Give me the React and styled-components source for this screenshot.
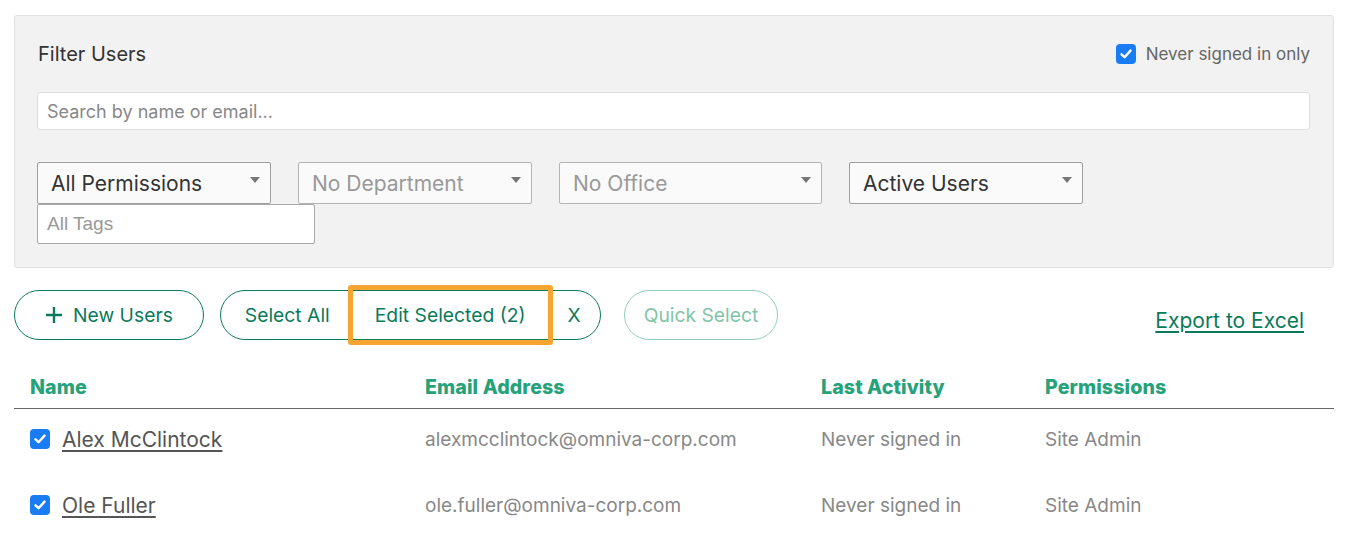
import React from 'react';
import styled, { createGlobalStyle } from 'styled-components';

const GlobalStyle = createGlobalStyle`
  body {
    margin: 0;
    background: #fff;
    font-family: Inter, "Open Sans", sans-serif;
  }
`;

const GREEN = '#0b7a5b';
const GREEN_LIGHT = '#26a27b';

// Page wrapper
const Page = styled.div`
  padding: 15px 18px 0 14px;
`;

// Grey filter panel
const FilterPanel = styled.section`
  background: #f2f2f2;
  border: 1px solid #e0e0e0;
  border-radius: 3px;
  padding: 22px 23px 23px 22px;
`;

const PanelHeader = styled.div`
  display: flex;
  align-items: center;
  justify-content: space-between;
  height: 32px;
`;

const PanelTitle = styled.h2`
  margin: 0 0 0 1px;
  font-size: 20px;
  font-weight: 400;
  color: #333;
`;

const CheckLabel = styled.label`
  display: flex;
  align-items: center;
  gap: 10px;
  font-size: 17px;
  color: #666;
`;

const Box = styled.span`
  width: 20px;
  height: 20px;
  border-radius: 4px;
  background: #1a7cf5;
  display: inline-flex;
  align-items: center;
  justify-content: center;
  flex-shrink: 0;
`;

const SearchInput = styled.div`
  margin-top: 22px;
  height: 36px;
  background: #fff;
  border: 1px solid #dcdcdc;
  border-radius: 3px;
  display: flex;
  align-items: center;
  padding-left: 9px;
  font-size: 18px;
  color: #888;
`;

const SelectRow = styled.div`
  margin-top: 32px;
  display: flex;
  gap: 27px;
`;

const SelectBox = styled.div`
  width: ${(p) => p.$width}px;
  height: 40px;
  box-sizing: content-box;
  background: #fafafa;
  border: 1px solid ${(p) => (p.$disabled ? '#b5b5b5' : '#a0a0a0')};
  border-radius: 2px;
  display: flex;
  align-items: center;
  justify-content: space-between;
  padding: 0 0 0 13px;
  font-size: 21px;
  color: ${(p) => (p.$disabled ? '#999' : '#333')};
`;

const Arrow = styled.span`
  width: 0;
  height: 0;
  border-left: 5px solid transparent;
  border-right: 5px solid transparent;
  border-top: 6px solid #777;
  margin: 0 10px 6px 0;
`;

const TagsInput = styled.div`
  width: 267px;
  height: 38px;
  background: #fff;
  border: 1px solid #a9a9a9;
  border-radius: 2px;
  display: flex;
  align-items: center;
  padding-left: 9px;
  font-family: "Liberation Sans", Arial, sans-serif;
  font-size: 19px;
  color: #999;
`;

// Action toolbar
const Toolbar = styled.div`
  margin-top: 22px;
  display: flex;
  align-items: center;
  gap: 16px;
`;

const PillButton = styled.button`
  height: 50px;
  border: 1px solid ${(p) => (p.$disabled ? '#93cfb8' : GREEN)};
  border-radius: 25px;
  background: #fff;
  color: ${(p) => (p.$disabled ? '#7fc4a8' : GREEN)};
  font-family: inherit;
  font-size: 19.3px;
  padding: 0 ${(p) => p.$pad || 20}px;
  display: inline-flex;
  align-items: center;
  gap: 10px;
  margin-left: ${(p) => p.$offset || 0}px;
`;

const Group = styled.div`
  display: flex;
  height: 50px;
  box-sizing: border-box;
  border: 1px solid ${GREEN};
  border-radius: 25px;
`;

const Segment = styled.button`
  position: relative;
  border: none;
  background: transparent;
  color: ${GREEN};
  font-family: inherit;
  font-size: 19.3px;
  padding: 0 ${(p) => p.$right}px 0 ${(p) => p.$left}px;

  ${(p) =>
    p.$highlight &&
    `
    &::after {
      content: '';
      position: absolute;
      top: -6px;
      bottom: -6px;
      left: -1px;
      right: -1px;
      border: 5px solid #f6a530;
      border-radius: 3px;
    }
  `}
`;

const ExportLink = styled.a`
  margin-left: auto;
  margin-right: 30px;
  margin-top: 11px;
  font-size: 21px;
  color: ${GREEN};
  text-decoration: underline;
  text-decoration-thickness: 1.5px;
  text-underline-offset: 3px;
`;

// Users table
const Table = styled.div`
  margin-top: 26px;
`;

const Row = styled.div`
  display: grid;
  grid-template-columns: 395px 396px 224px 1fr;
  align-items: center;
  box-sizing: border-box;
  height: ${(p) => (p.$head ? 43 : 66)}px;
  padding-bottom: ${(p) => (p.$head ? 0 : 6)}px;
  border-bottom: ${(p) => (p.$head ? '1px solid #666' : 'none')};
`;

const HeadCell = styled.div`
  padding-left: 16px;
  font-size: 19.6px;
  font-weight: 800;
  color: ${GREEN_LIGHT};
  letter-spacing: 0.1px;
`;

const Cell = styled.div`
  padding-left: 16px;
  font-size: 19px;
  color: #888;
  display: flex;
  align-items: center;
  gap: 12px;
`;

const NameLink = styled.a`
  font-size: 21px;
  color: #555;
  text-decoration: underline;
  text-decoration-thickness: 1.5px;
  text-underline-offset: 3px;
`;

const Check = () => (
  <Box>
    <svg width="14" height="14" viewBox="0 0 14 14" fill="none">
      <path d="M2.5 7.3 L5.6 10.2 L11.5 3.6" stroke="#fff" strokeWidth="2.4" strokeLinecap="round" strokeLinejoin="round" />
    </svg>
  </Box>
);

const users = [
  { name: 'Alex McClintock', email: 'alexmcclintock@omniva-corp.com' },
  { name: 'Ole Fuller', email: 'ole.fuller@omniva-corp.com' },
];

export default function App() {
  return (
    <Page>
      <GlobalStyle />
      <FilterPanel>
        <PanelHeader>
          <PanelTitle>Filter Users</PanelTitle>
          <CheckLabel>
            <Check />
            Never signed in only
          </CheckLabel>
        </PanelHeader>
        <SearchInput>Search by name or email...</SearchInput>
        <SelectRow>
          <SelectBox $width={219}>
            All Permissions
            <Arrow />
          </SelectBox>
          <SelectBox $width={219} $disabled>
            No Department
            <Arrow />
          </SelectBox>
          <SelectBox $width={248} $disabled>
            No Office
            <Arrow />
          </SelectBox>
          <SelectBox $width={219}>
            Active Users
            <Arrow />
          </SelectBox>
        </SelectRow>
        <TagsInput>All Tags</TagsInput>
      </FilterPanel>

      <Toolbar>
        <PillButton $pad={30}>
          <svg width="18" height="18" viewBox="0 0 18 18">
            <path d="M9 1v16M1 9h16" stroke={GREEN} strokeWidth="2.4" />
          </svg>
          New Users
        </PillButton>
        <Group>
          <Segment $left={24} $right={19}>Select All</Segment>
          <Segment $left={26} $right={26} $highlight>Edit Selected (2)</Segment>
          <Segment $left={16} $right={19}>X</Segment>
        </Group>
        <PillButton $disabled $pad={19} $offset={7}>Quick Select</PillButton>
        <ExportLink href="#">Export to Excel</ExportLink>
      </Toolbar>

      <Table>
        <Row $head>
          <HeadCell>Name</HeadCell>
          <HeadCell>Email Address</HeadCell>
          <HeadCell>Last Activity</HeadCell>
          <HeadCell>Permissions</HeadCell>
        </Row>
        {users.map((u) => (
          <Row key={u.email}>
            <Cell>
              <Check />
              <NameLink href="#">{u.name}</NameLink>
            </Cell>
            <Cell>{u.email}</Cell>
            <Cell>Never signed in</Cell>
            <Cell>Site Admin</Cell>
          </Row>
        ))}
      </Table>
    </Page>
  );
}
